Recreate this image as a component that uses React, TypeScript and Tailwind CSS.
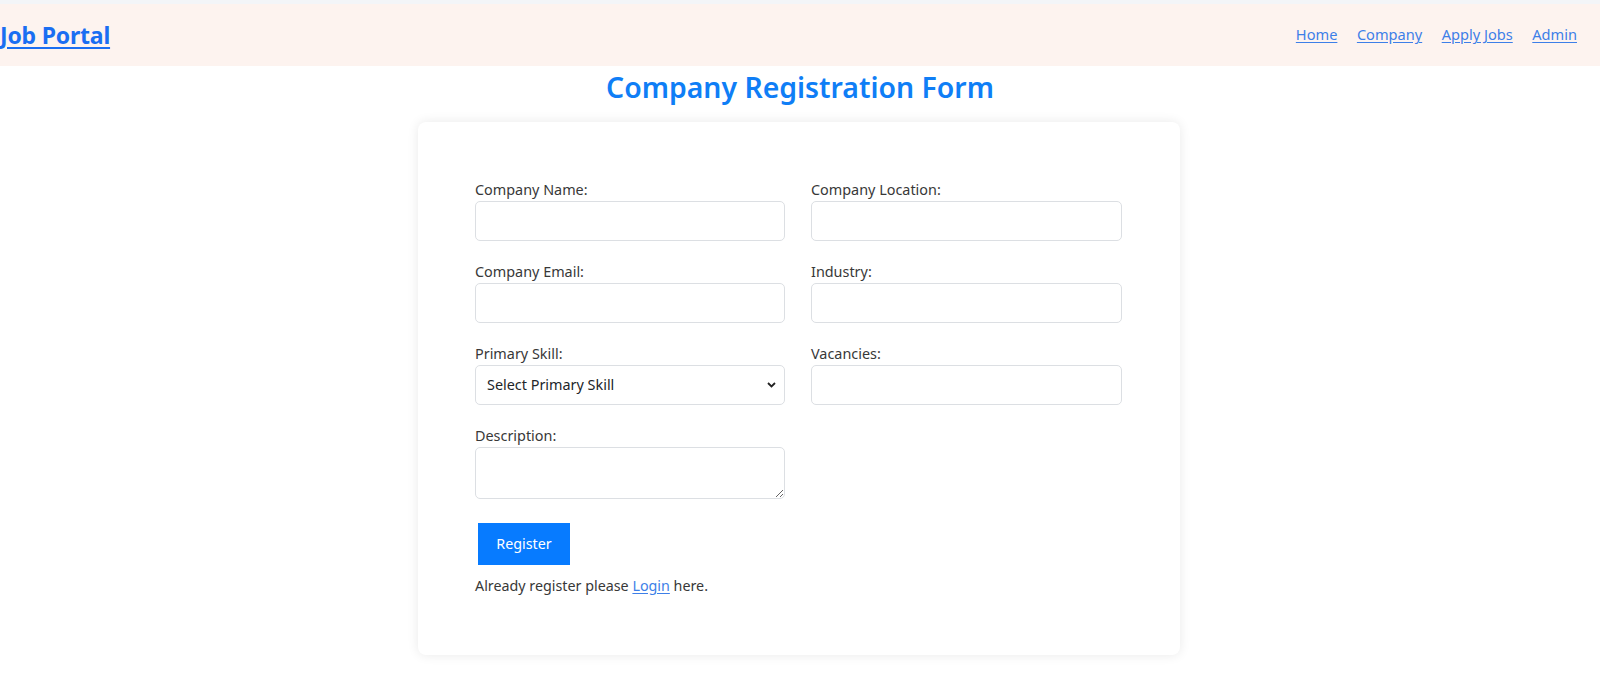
import React from "react";

const font = { fontFamily: '"Noto Sans", "Open Sans", sans-serif' };

function Field({ label, children }: { label: string; children: React.ReactNode }) {
  return (
    <div className="flex flex-col mb-[21px]">
      <label className="h-[20px] mb-[1px] text-[14.4px] leading-[20px] text-[#383838]">{label}</label>
      {children}
    </div>
  );
}

function Input() {
  return (
    <input
      type="text"
      className="h-[40px] w-full rounded-[5px] border border-[#dcdfe3] bg-white px-3 outline-none"
    />
  );
}

export default function App() {
  return (
    <div className="min-h-[682px] w-full bg-white text-[#333]" style={font}>
      <div className="h-[4px] bg-[#f3f5f8]" />
      <header className="flex h-[62px] items-center justify-between bg-[#fdf3ef] pr-[23px]">
        <a href="#" className="text-[23px] font-bold leading-none text-[#1a6ef2] underline underline-offset-[3px] tracking-[-0.2px]">
          Job Portal
        </a>
        <nav className="flex items-center gap-[19.5px] text-[14.6px] text-[#3d7fe8]">
          <a href="#" className="underline underline-offset-[2px]">Home</a>
          <a href="#" className="underline underline-offset-[2px]">Company</a>
          <a href="#" className="underline underline-offset-[2px]">Apply Jobs</a>
          <a href="#" className="underline underline-offset-[2px]">Admin</a>
        </nav>
      </header>
      <h1 className="mt-[1px] text-center text-[28.4px] font-semibold leading-[40px] text-[#0f7ef6]">
        Company Registration Form
      </h1>
      <div className="mx-auto mt-[15px] w-[762px] -translate-x-[1px] rounded-[8px] bg-white pl-[57px] pr-[58px] pt-[58px] pb-[57px] shadow-[0_0_12px_rgba(0,0,0,0.09)]">
        <div className="grid grid-cols-[310px_311px] gap-x-[26px]">
          <Field label="Company Name:"><Input /></Field>
          <Field label="Company Location:"><Input /></Field>
          <Field label="Company Email:"><Input /></Field>
          <Field label="Industry:"><Input /></Field>
          <Field label="Primary Skill:">
            <div className="relative">
              <select className="h-[40px] w-full appearance-none rounded-[5px] border border-[#dcdfe3] bg-white pl-[11px] text-[14.4px] text-[#212529] outline-none">
                <option>Select Primary Skill</option>
              </select>
              <svg className="pointer-events-none absolute right-[9px] top-[17px]" width="9" height="6" viewBox="0 0 9 6">
                <path d="M1 1l3.5 3.5L8 1" stroke="#222" strokeWidth="1.8" fill="none" />
              </svg>
            </div>
          </Field>
          <Field label="Vacancies:"><Input /></Field>
          <div className="flex flex-col">
            <label className="h-[20px] mb-[1px] text-[14.4px] leading-[20px] text-[#383838]">Description:</label>
            <textarea className="h-[52px] w-full rounded-[5px] border border-[#dcdfe3] bg-white px-3 outline-none" />
          </div>
        </div>
        <button className="ml-[3px] mt-[24px] h-[42px] w-[92px] bg-[#077bff] text-[14.3px] text-white">
          Register
        </button>
        <p className="mt-[9px] text-[14.3px] leading-[24px] text-[#383838]">
          Already register please <a href="#" className="text-[#3d7fe8] underline underline-offset-[2px]">Login</a> here.
        </p>
      </div>
    </div>
  );
}
